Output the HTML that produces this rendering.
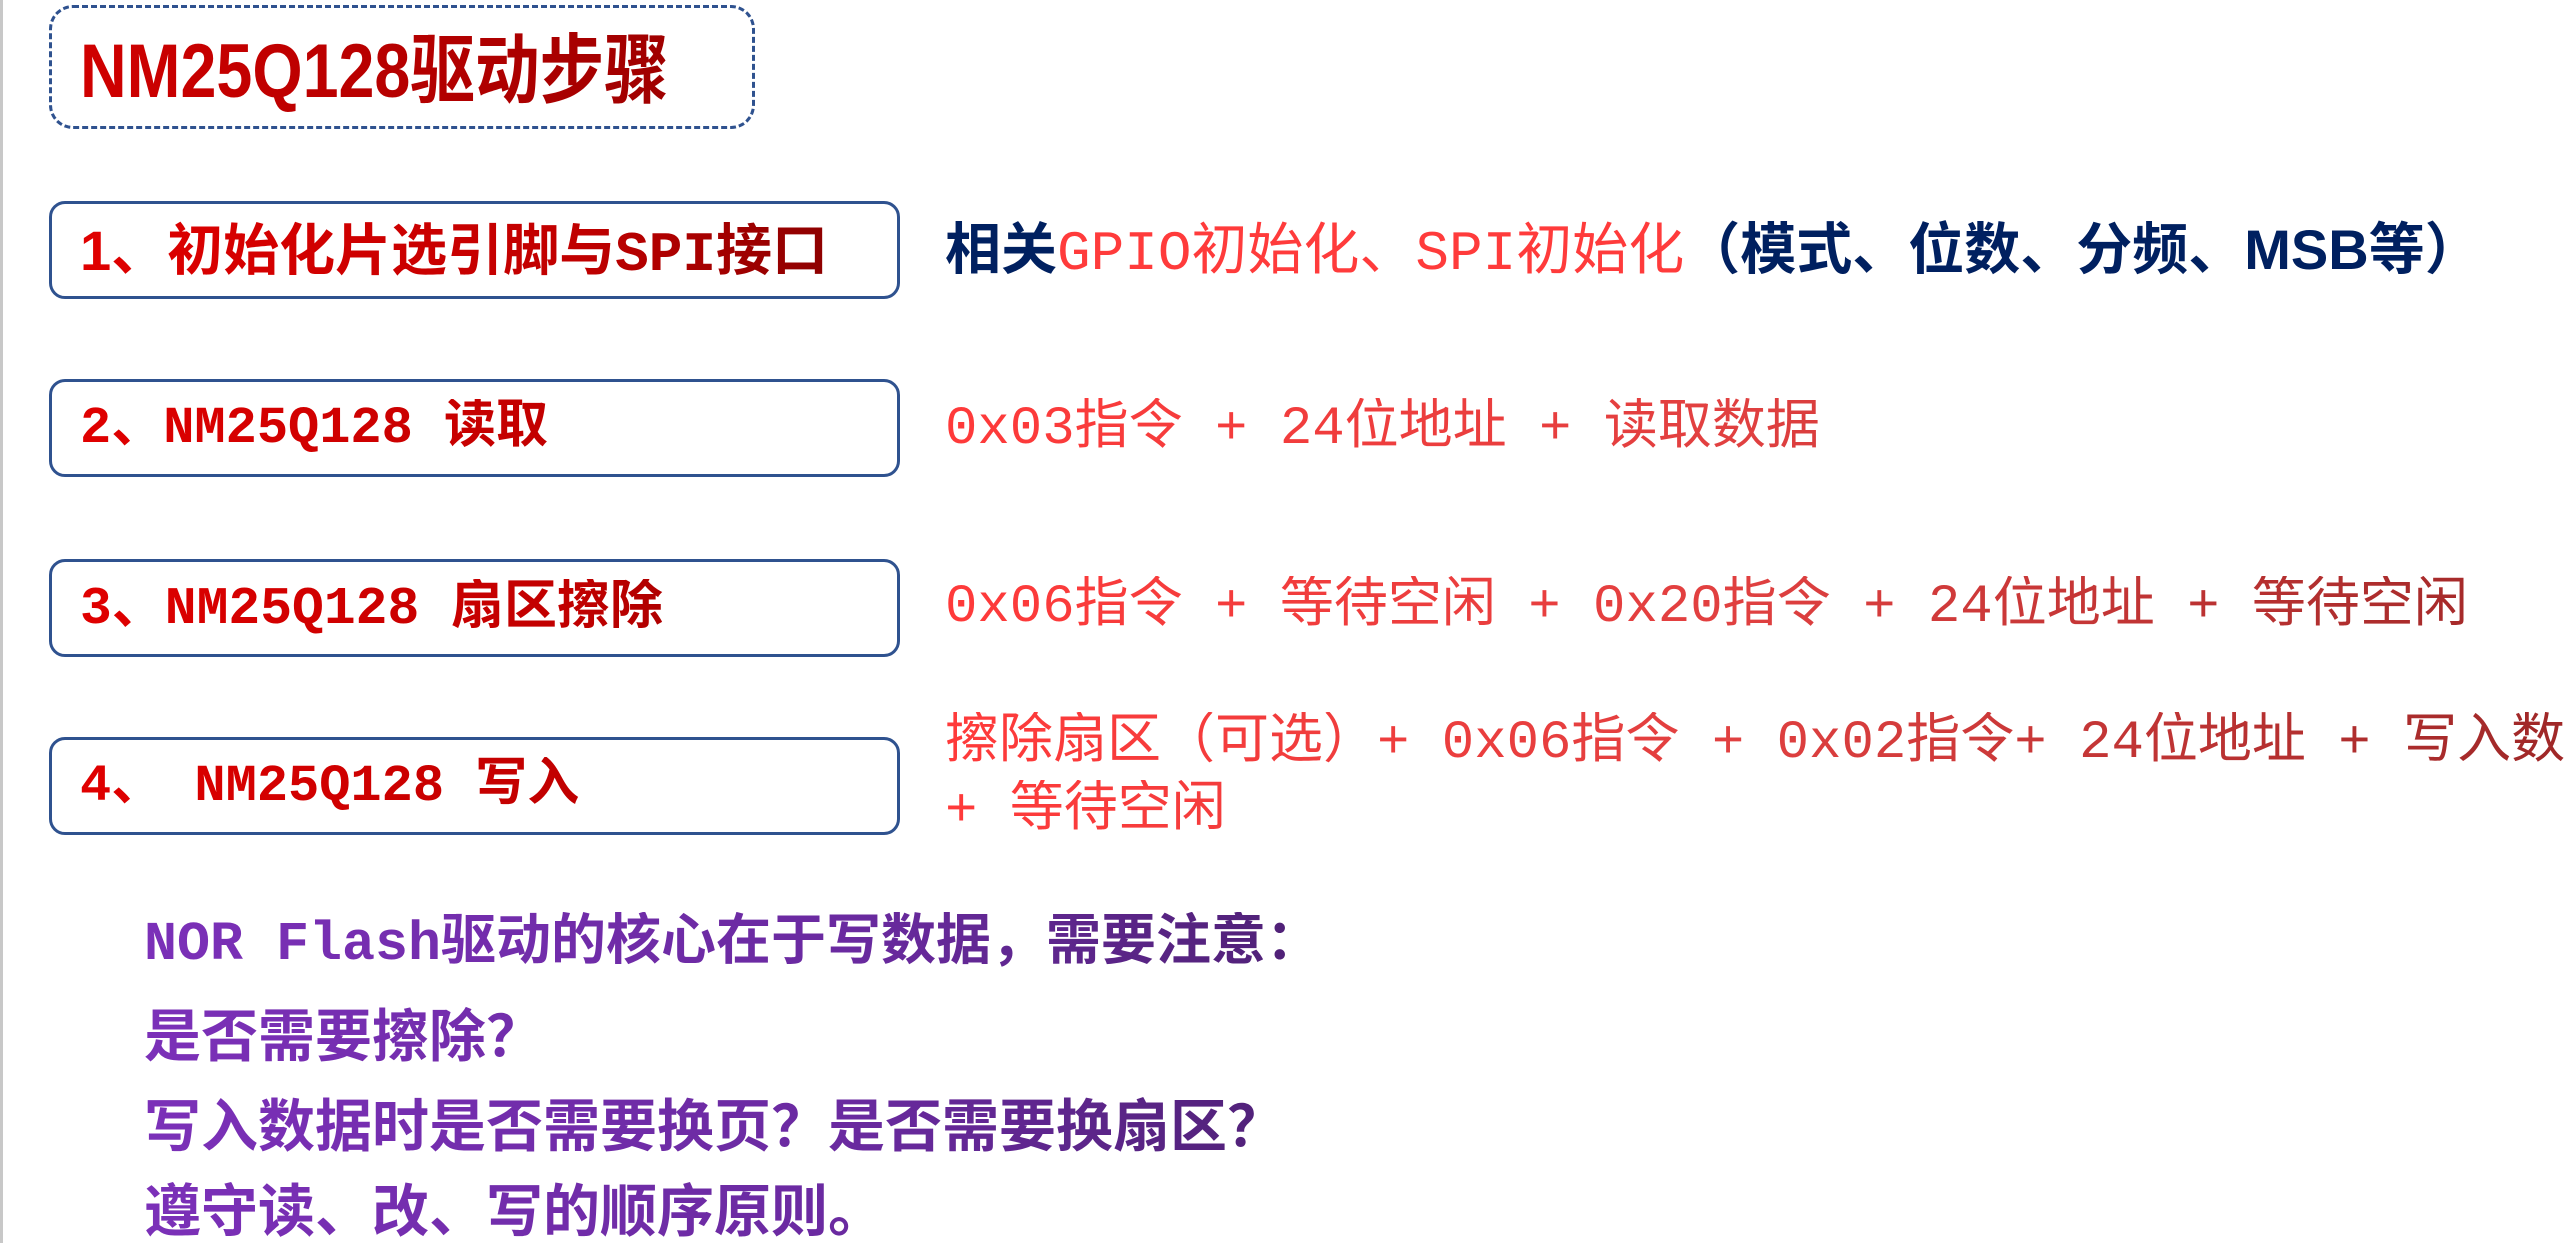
<!DOCTYPE html>
<html><head><meta charset="utf-8"><style>
html,body{margin:0;padding:0;background:#fff;}
body{width:2564px;height:1243px;position:relative;overflow:hidden;font-family:"Liberation Sans","Noto Sans CJK SC",sans-serif;}
.lb{position:absolute;left:0;top:0;width:3px;height:1243px;background:#c8c8c8;}
.tbox{position:absolute;left:49px;top:5px;width:706px;height:124px;border:3px dashed #2f528f;border-radius:24px;box-sizing:border-box;}
.title{position:absolute;left:80px;top:24px;font-size:76px;font-weight:bold;line-height:96px;white-space:nowrap;transform:scaleX(0.85);transform-origin:left center;
 background:linear-gradient(90deg,#d00000,#a00000);-webkit-background-clip:text;background-clip:text;color:transparent;}
.box{position:absolute;left:49px;width:851px;height:98px;border:3px solid #2f528f;border-radius:16px;box-sizing:border-box;}
.bt{position:absolute;left:80px;font-size:52px;font-weight:bold;line-height:60px;white-space:nowrap;
 background:linear-gradient(90deg,#e00000 0,#c00000 500px,#8b0000 760px);-webkit-background-clip:text;background-clip:text;color:transparent;}
.rt{position:absolute;left:945px;font-size:54px;line-height:64px;white-space:nowrap;}
.r{background:linear-gradient(90deg,#ff3a3a 0,#e04040 800px,#a02828 1600px);-webkit-background-clip:text;background-clip:text;color:transparent;}
.n{color:#002060;font-weight:bold;}
.rd{color:#ff3b3b;}
.p{position:absolute;left:144px;font-size:57px;line-height:66px;white-space:nowrap;font-weight:bold;
 background:linear-gradient(90deg,#7b30b8 0,#6a2aa0 700px,#4a1f6e 1250px);-webkit-background-clip:text;background-clip:text;color:transparent;}
.m{font-family:"Liberation Mono","Noto Sans CJK SC",monospace;}
</style></head><body>
<div class="lb"></div>
<div class="tbox"></div>
<div class="title">NM25Q128驱动步骤</div>

<div class="box" style="top:201px"></div>
<div class="bt" style="top:221px;font-size:56px">1、初始化片选引脚与<span class="m">SPI</span>接口</div>
<div class="rt" style="top:218px;font-size:56px"><span class="n">相关</span><span class="rd"><span class="m">GPIO</span>初始化、<span class="m">SPI</span>初始化</span><span class="n">（模式、位数、分频、MSB等）</span></div>

<div class="box" style="top:379px"></div>
<div class="bt m" style="top:399px">2、NM25Q128 读取</div>
<div class="rt r m" style="top:398px">0x03指令 + 24位地址 + 读取数据</div>

<div class="box" style="top:559px"></div>
<div class="bt m" style="top:579px;font-size:53px">3、NM25Q128 扇区擦除</div>
<div class="rt r m" style="top:576px">0x06指令 + 等待空闲 + 0x20指令 + 24位地址 + 等待空闲</div>

<div class="box" style="top:737px"></div>
<div class="bt m" style="top:757px">4、 NM25Q128 写入</div>
<div class="rt r m" style="top:712px">擦除扇区（可选）+ 0x06指令 + 0x02指令+ 24位地址 + 写入数据</div>
<div class="rt r m" style="top:780px">+ 等待空闲</div>

<div class="p m" style="top:912px;font-size:55px">NOR Flash驱动的核心在于写数据，需要注意：</div>
<div class="p" style="top:999px">是否需要擦除<span style="font-family:'Noto Sans CJK SC',sans-serif">？</span></div>
<div class="p" style="top:1089px">写入数据时是否需要换页<span style="font-family:'Noto Sans CJK SC',sans-serif">？</span>是否需要换扇区<span style="font-family:'Noto Sans CJK SC',sans-serif">？</span></div>
<div class="p" style="top:1179px">遵守读、改、写的顺序原则。</div>
</body></html>
